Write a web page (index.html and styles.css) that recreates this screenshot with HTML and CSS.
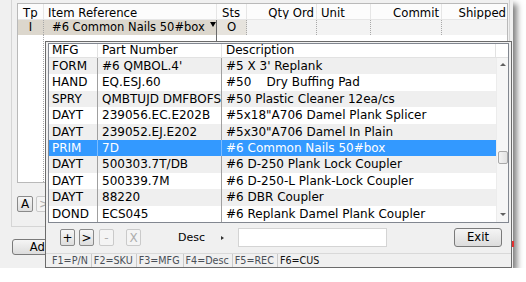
FILE: index.html
```html
<!DOCTYPE html>
<html lang="en">
  <head>
    <meta charset="utf-8" />
    <meta name="viewport" content="width=device-width, initial-scale=1" />
    <title>Item Lookup</title>
    <link rel="stylesheet" href="styles.css">
  </head>
  <body>
    <div class="window">
      <!--Order lines-->
      <div class="group">
        <div class="grid">
          <div class="grid-row grid-head">
            <div class="cell c-tp">Tp</div>
            <div class="cell">Item Reference</div>
            <div class="cell c-sts">Sts</div>
            <div class="cell right">Qty Ord</div>
            <div class="cell">Unit</div>
            <div class="cell right">Commit</div>
            <div class="cell right last">Shipped</div>
          </div>
          <div class="grid-row grid-current">
            <div class="cell c-tp">I</div>
            <div class="cell combo">
              <span>#6 Common Nails 50#box</span>
              <span class="combo-arrow"></span>
            </div>
            <div class="cell c-sts">O</div>
            <div class="cell"></div>
            <div class="cell"></div>
            <div class="cell"></div>
            <div class="cell last"></div>
          </div>
          <div class="grid-body">
            <div class="cell c-tp"></div>
            <div class="cell combo"></div>
          </div>
        </div>
        <div class="nav">
          <button class="btn-sm" type="button">A</button>
          <button class="btn-sm" type="button" disabled>&gt;</button>
        </div>
      </div>
      <div class="actions">
        <button class="btn btn-add" type="button">Add</button>
      </div>
      <span class="marker"></span>

      <!--Lookup dropdown-->
      <div class="lookup">
        <div class="list">
          <div class="list-head">
            <div class="lcell c-mfg">MFG</div>
            <div class="lcell c-part">Part Number</div>
            <div class="lcell c-desc">Description</div>
            <div class="lcell"></div>
          </div>
          <div class="list-rows">
            <div class="lrow alt"><div class="lcell c-mfg">FORM</div><div class="lcell c-part">#6 QMBOL.4'</div><div class="lcell c-desc">#5 X 3' Replank</div></div>
            <div class="lrow"><div class="lcell c-mfg">HAND</div><div class="lcell c-part">EQ.ESJ.60</div><div class="lcell c-desc">#50    Dry Buffing Pad</div></div>
            <div class="lrow alt"><div class="lcell c-mfg">SPRY</div><div class="lcell c-part">QMBTUJD DMFBOFS</div><div class="lcell c-desc">#50 Plastic Cleaner 12ea/cs</div></div>
            <div class="lrow"><div class="lcell c-mfg">DAYT</div><div class="lcell c-part">239056.EC.E202B</div><div class="lcell c-desc">#5x18"A706 Damel Plank Splicer</div></div>
            <div class="lrow alt"><div class="lcell c-mfg">DAYT</div><div class="lcell c-part">239052.EJ.E202</div><div class="lcell c-desc">#5x30"A706 Damel In Plain</div></div>
            <div class="lrow selected"><div class="lcell c-mfg">PRIM</div><div class="lcell c-part">7D</div><div class="lcell c-desc">#6 Common Nails 50#box</div></div>
            <div class="lrow alt"><div class="lcell c-mfg">DAYT</div><div class="lcell c-part">500303.7T/DB</div><div class="lcell c-desc">#6 D-250 Plank Lock Coupler</div></div>
            <div class="lrow"><div class="lcell c-mfg">DAYT</div><div class="lcell c-part">500339.7M</div><div class="lcell c-desc">#6 D-250-L Plank-Lock Coupler</div></div>
            <div class="lrow alt"><div class="lcell c-mfg">DAYT</div><div class="lcell c-part">88220</div><div class="lcell c-desc">#6 DBR Coupler</div></div>
            <div class="lrow"><div class="lcell c-mfg">DOND</div><div class="lcell c-part">ECS045</div><div class="lcell c-desc">#6 Replank Damel Plank Coupler</div></div>
          </div>
          <div class="scrollbar">
            <span class="sb-arrow up"></span>
            <div class="sb-track"><span class="sb-thumb"></span></div>
            <span class="sb-arrow down"></span>
          </div>
        </div>

        <div class="tools">
          <button class="btn-sm tool" type="button">+</button>
          <button class="btn-sm tool" type="button">&gt;</button>
          <button class="btn-sm tool" type="button" disabled>-</button>
          <button class="btn-sm tool tool-x" type="button" disabled>X</button>
          <span class="search-label">Desc</span>
          <span class="search-arrow"></span>
          <input class="search-input" type="text" />
          <button class="btn btn-exit" type="button">Exit</button>
        </div>

        <div class="status">
          <span class="status-item">F1=P/N</span>
          <span class="status-item">F2=SKU</span>
          <span class="status-item">F3=MFG</span>
          <span class="status-item">F4=Desc</span>
          <span class="status-item">F5=REC</span>
          <span class="status-item active">F6=CUS</span>
        </div>
      </div>
    </div>
  </body>
</html>
```

FILE: styles.css
```css
* {
  box-sizing: border-box;
}
body {
  margin: 0;
  background: #fff;
  font-family: "DejaVu Sans", Verdana, sans-serif;
  color: #000;
}
.window {
  position: relative;
  width: 513px;
  height: 268px;
  background: #f0f0f0;
  box-shadow: 4px 4px 6px rgba(0, 0, 0, 0.5);
}

/* order lines grid */
.group {
  margin: 0 3px 0 11px;
  padding: 3px 1px 14px 5px;
  border: 1px solid #d5d5d5;
  border-top: 0;
}
.grid {
  height: 180px;
  background: #fff;
  border: 1px solid #b9b9b9;
  font-size: 11.7px;
  display: flex;
  flex-direction: column;
}
.grid-row {
  display: grid;
  grid-template-columns: 26px 173px 30px 70px 54px 71px 1fr;
}
.cell {
  padding: 0 4px;
  white-space: nowrap;
  overflow: hidden;
}
.cell.right {
  text-align: right;
  padding-right: 2px;
}
.grid-head {
  height: 16px;
  background: #fcfcfc;
  border-bottom: 1px solid #e6e6e6;
}
.grid-head .cell {
  padding-top: 2px;
  line-height: 14px;
  border-right: 1px solid #e6e6e6;
}
.grid-head .c-tp {
  padding-left: 5px;
}
.grid-head .c-sts {
  padding-left: 5px;
}
.grid-head .last {
  border-right: 0;
  padding-right: 1px;
}
.grid-current {
  height: 15px;
  background: #f3f3f3;
}
.grid-current .cell {
  line-height: 15px;
  border-right: 1px dotted #a8a8a8;
}
.grid-current .c-tp {
  background: #dcd7cd;
  text-align: center;
}
.grid-current .combo {
  background: #dcd7cd;
  display: flex;
  padding: 0 0 0 8px;
  font-size: 11.5px;
  border-right: 1px solid #6a6a6a;
}
.grid-current .c-sts {
  background: #e6e3dd;
  padding-left: 10px;
}
.grid-current .last {
  border-right: 0;
}
.combo-arrow {
  margin: 2px 0 0 auto;
  border-left: 3px solid transparent;
  border-right: 3px solid transparent;
  border-top: 5px solid #000;
  height: 0;
}
.grid-body {
  flex: 1;
  display: grid;
  grid-template-columns: 26px 173px;
}
.grid-body .c-tp {
  border-right: 1px dotted #a8a8a8;
}
.grid-body .combo {
  border-right: 1px solid #6a6a6a;
}
.nav {
  display: flex;
  gap: 3px;
  margin-top: 13px;
}

/* buttons */
.btn-sm {
  width: 16px;
  height: 16px;
  padding: 0;
  border: 1px solid #8a8a8a;
  border-radius: 2px;
  background: linear-gradient(#f6f6f6, #dedede);
  font-family: "DejaVu Sans", Verdana, sans-serif;
  font-size: 12px;
  line-height: 14px;
  color: #000;
}
.btn-sm:disabled {
  border-color: #cacaca;
  background: #f4f4f4;
  color: #adadad;
}
.btn {
  height: 17px;
  padding: 0;
  border: 1px solid #7a7a7a;
  border-radius: 3px;
  background: linear-gradient(#f5f5f5, #dcdcdc);
  font-family: "DejaVu Sans", Verdana, sans-serif;
  font-size: 11.6px;
  line-height: 15px;
  color: #000;
}
.actions {
  padding: 9px 0 0 12px;
}
.btn-add {
  width: 58px;
  height: 16px;
}
.marker {
  position: absolute;
  right: -1px;
  top: 241px;
  width: 2px;
  height: 6px;
  background: #e23030;
}

/* lookup dropdown */
.lookup {
  position: absolute;
  left: 45px;
  top: 41px;
  right: 1px;
  bottom: 0;
  border: 1px solid #6b6b6b;
  background: #f0f0f0;
  display: flex;
  flex-direction: column;
}
.list {
  margin: 1px 2px 0;
  height: 180px;
  border: 1px solid #828790;
  background: #fff;
  display: grid;
  grid-template-columns: 1fr 12px;
  grid-template-rows: 14px 1fr;
  font-size: 12px;
}
.list-head {
  grid-column: 1 / 3;
  display: grid;
  grid-template-columns: 49px 124px 1fr 12px;
  border-bottom: 1px solid #e2e2e2;
}
.list-head .lcell {
  line-height: 13px;
  border-right: 1px solid #e2e2e2;
}
.list-head .lcell:last-child {
  border-right: 0;
}
.lrow {
  display: grid;
  grid-template-columns: 49px 124px 1fr;
  height: 16.4px;
  line-height: 16.4px;
}
.lcell {
  padding-left: 4px;
  white-space: pre;
  overflow: hidden;
}
.lcell.c-mfg {
  padding-left: 3px;
}
.lrow .c-mfg,
.lrow .c-part {
  border-right: 1px solid #a0a0a0;
}
.lrow.alt {
  background: #efefef;
}
.lrow.selected {
  background: #3399ff;
  color: #fff;
}
.lrow.selected .c-mfg,
.lrow.selected .c-part {
  border-right-color: #7cbcff;
}
.scrollbar {
  display: flex;
  flex-direction: column;
  align-items: center;
  background: #f6f6f6;
  border-left: 1px solid #ececec;
}
.sb-arrow {
  height: 0;
  border-left: 3px solid transparent;
  border-right: 3px solid transparent;
}
.sb-arrow.up {
  margin: 5px 0 8px;
  border-bottom: 3px solid #606060;
}
.sb-arrow.down {
  margin: 8px 0 6px;
  border-top: 3px solid #606060;
}
.sb-track {
  flex: 1;
  width: 100%;
  padding: 77px 0 0 1px;
}
.sb-thumb {
  display: block;
  width: 10px;
  height: 13px;
  border: 1px solid #a9a9a9;
  border-radius: 2px;
  background: linear-gradient(90deg, #f3f3f3, #e2e2e2);
}
.tools {
  height: 31px;
  display: flex;
  align-items: center;
  padding: 0 9px 0 14px;
}
.tool {
  width: 15px;
  height: 17px;
  margin-right: 4px;
}
.tool:nth-child(2) {
  margin-right: 5px;
}
.tool:nth-child(3) {
  margin-right: 12px;
}
.search-label {
  margin-left: 33px;
  font-size: 11px;
}
.search-arrow {
  margin-left: 16px;
  height: 0;
  border-top: 2px solid transparent;
  border-bottom: 2px solid transparent;
  border-left: 3px solid #333;
}
.search-input {
  margin-left: 14px;
  width: 149px;
  height: 19px;
  border: 1px solid #d4d4d4;
  background: #fff;
}
.btn-exit {
  margin-left: auto;
  width: 48px;
  height: 19px;
}
.status {
  flex: 1;
  display: flex;
  padding-left: 3px;
  border-top: 1px solid #d9d9d9;
  font-size: 9.6px;
  line-height: 13px;
  color: #4a4f57;
}
.status-item {
  padding: 0 3px 0 2px;
  border-right: 1px solid #cacaca;
}
.status-item:first-child {
  padding-left: 3px;
}
.status-item.active {
  color: #111;
  border-right: 0;
}
```
